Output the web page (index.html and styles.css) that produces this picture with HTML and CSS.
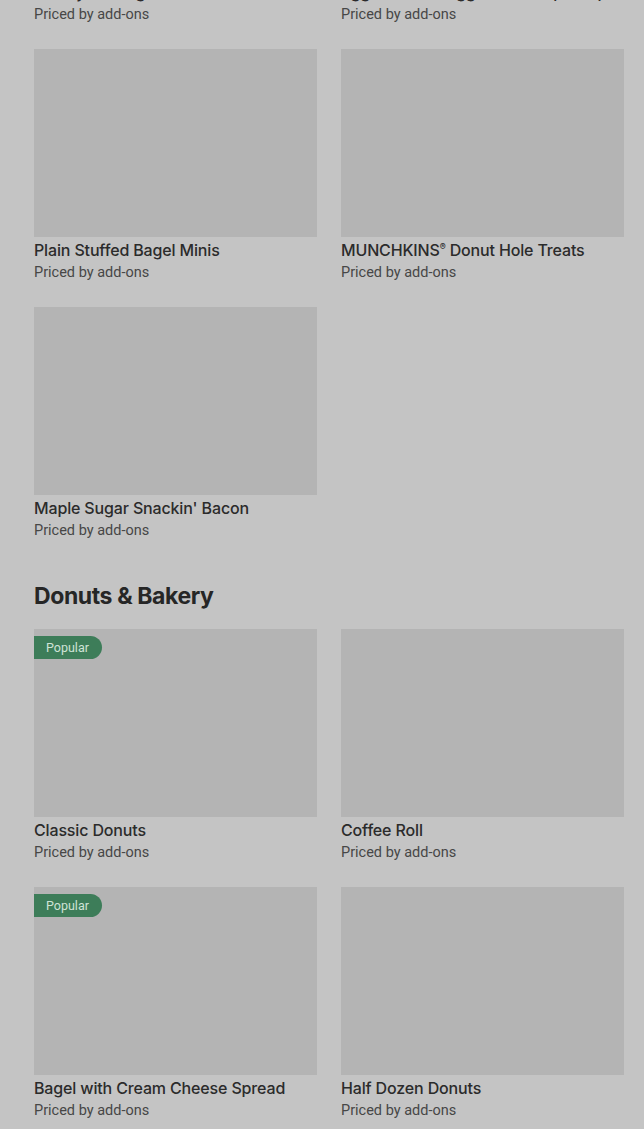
FILE: index.html
```html
<!DOCTYPE html>
<html lang="en">
<head>
<meta charset="utf-8">
<title>Menu</title>
<link rel="stylesheet" href="styles.css">
</head>
<body>
<main class="page">
  <section class="section">
    <div class="grid">
      <article class="card">
        <div class="thumb"></div>
        <h3 class="title">Turkey Sausage Sandwich</h3>
        <p class="price">Priced by add-ons</p>
      </article>
      <article class="card">
        <div class="thumb"></div>
        <h3 class="title">Egg White &amp; Veggie Wake-Up Wrap</h3>
        <p class="price">Priced by add-ons</p>
      </article>
      <article class="card">
        <div class="thumb"></div>
        <h3 class="title">Plain Stuffed Bagel Minis</h3>
        <p class="price">Priced by add-ons</p>
      </article>
      <article class="card">
        <div class="thumb"></div>
        <h3 class="title">MUNCHKINS<sup class="reg">®</sup> Donut Hole Treats</h3>
        <p class="price">Priced by add-ons</p>
      </article>
      <article class="card">
        <div class="thumb"></div>
        <h3 class="title">Maple Sugar Snackin' Bacon</h3>
        <p class="price">Priced by add-ons</p>
      </article>
    </div>
  </section>

  <section class="section">
    <h2 class="heading">Donuts &amp; Bakery</h2>
    <div class="grid">
      <article class="card">
        <div class="thumb"><span class="badge">Popular</span></div>
        <h3 class="title">Classic Donuts</h3>
        <p class="price">Priced by add-ons</p>
      </article>
      <article class="card">
        <div class="thumb"></div>
        <h3 class="title">Coffee Roll</h3>
        <p class="price">Priced by add-ons</p>
      </article>
      <article class="card">
        <div class="thumb"><span class="badge">Popular</span></div>
        <h3 class="title">Bagel with Cream Cheese Spread</h3>
        <p class="price">Priced by add-ons</p>
      </article>
      <article class="card">
        <div class="thumb"></div>
        <h3 class="title">Half Dozen Donuts</h3>
        <p class="price">Priced by add-ons</p>
      </article>
    </div>
  </section>
</main>
</body>
</html>
```

FILE: styles.css
```css
html, body {
  margin: 0;
  padding: 0;
  background: #c4c4c4;
}

body {
  font-family: Inter, "Noto Sans", "Liberation Sans", sans-serif;
  color: #2a2a2a;
  overflow: hidden;
}

.page {
  padding: 0 20px 0 34px;
  margin-top: -209px;
}

.section + .section {
  margin-top: 39px;
}

.heading {
  margin: 0 0 17px;
  font-size: 23px;
  line-height: 32px;
  font-weight: 700;
  letter-spacing: -0.4px;
  color: #262626;
}

.grid {
  display: grid;
  grid-template-columns: 283px 283px;
  column-gap: 24px;
  row-gap: 24px;
}

.card {
  margin: 0;
}

.thumb {
  position: relative;
  height: 188px;
  background: #b4b4b4;
}

.badge {
  position: absolute;
  left: 0;
  top: 7px;
  height: 23px;
  line-height: 23px;
  padding: 0 13px 0 12px;
  font-family: Roboto, "Noto Sans", sans-serif;
  font-size: 12.5px;
  color: #cfe3d6;
  background: #3d7d59;
  border-radius: 0 12px 12px 0;
}

.title {
  margin: 3px 0 0;
  font-size: 16px;
  line-height: 20px;
  font-weight: 500;
  letter-spacing: -0.15px;
  color: #2b2b2b;
}

.reg {
  font-size: 9px;
  vertical-align: 6px;
  line-height: 0;
}

.price {
  margin: 3px 0 0;
  font-family: Roboto, "Noto Sans", sans-serif;
  font-size: 14.5px;
  line-height: 20px;
  font-weight: 400;
  color: #474747;
}
```
